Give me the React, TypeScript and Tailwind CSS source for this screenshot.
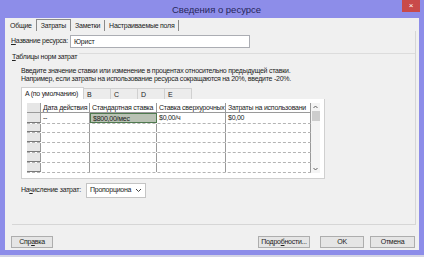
import React from "react";

const cols = [
  { w: "w-[49px]", title: "Дата действия" },
  { w: "w-[67px]", title: "Стандартная ставка" },
  { w: "w-[69px]", title: "Ставка сверхурочных" },
  { w: "w-[85px]", title: "Затраты на использовани" },
];

const rows = [
  ["--", "$800,00/мес", "$0,00/ч", "$0,00"],
  ["", "", "", ""],
  ["", "", "", ""],
  ["", "", "", ""],
  ["", "", "", ""],
  ["", "", "", ""],
];

const RateGrid = () => {
  return (
    <div className="flex ml-[5px] mt-[4px] w-[293px] h-[70px] overflow-hidden">
      <div className="flex flex-col">
        {/* header */}
        <div className="flex h-[10px] border-b border-[#9a9a9a]">
          <div className="w-[14px] bg-[#e6e6e6] border-r border-[#9a9a9a]"></div>
          {cols.map((c) => (
            <div
              key={c.title}
              className={`${c.w} border-r border-[#9a9a9a] pl-[2px] leading-[10px] whitespace-nowrap overflow-hidden text-[#222]`}
            >
              {c.title}
            </div>
          ))}
        </div>
        {rows.map((r, i) => (
          <div key={i} className="flex h-[10.5px] border-b border-dashed border-[#b4b4b4]">
            <div className="w-[14px] bg-[#e6e6e6] border-r border-[#9a9a9a] border-b border-b-[#7a7a7a]"></div>
            {r.map((v, j) =>
              i === 0 && j === 1 ? (
                <div
                  key={j}
                  className={`${cols[j].w} bg-[#b9c2b4] border border-[#4f7a4f] pl-[2px] leading-[9px] whitespace-nowrap text-[#222]`}
                >
                  {v}
                </div>
              ) : (
                <div
                  key={j}
                  className={`${cols[j].w} border-r border-[#9a9a9a] pl-[2px] leading-[10px] whitespace-nowrap text-[#222]`}
                >
                  {v}
                </div>
              )
            )}
          </div>
        ))}
      </div>
      {/* scrollbar */}
      <div className="w-[9px] flex flex-col items-center bg-[#f4f4f4]">
        <svg width="9" height="8" viewBox="0 0 9 8">
          <path d="M2.5 5 L4.5 3 L6.5 5" stroke="#606060" strokeWidth="1" fill="none" />
        </svg>
        <div className="w-[8px] h-[10px] bg-[#cdcdcd]"></div>
        <div className="flex-1"></div>
        <svg width="9" height="8" viewBox="0 0 9 8">
          <path d="M2.5 3 L4.5 5 L6.5 3" stroke="#606060" strokeWidth="1" fill="none" />
        </svg>
      </div>
    </div>
  );
};

const Button = ({ label, w }: { label: React.ReactNode; w: string }) => (
  <div
    className={`${w} h-[12px] border border-[#adadad] bg-[#e5e5e5] flex items-center justify-center text-[#222] whitespace-nowrap`}
  >
    {label}
  </div>
);

export default function App() {
  return (
    <div className="w-[424px] h-[257px] bg-[#8d8de9] flex flex-col font-['Liberation_Sans',Arial,sans-serif] text-[7px] tracking-[-0.25px] overflow-hidden">
      {/* title bar */}
      <div className="h-[18px] flex items-start relative">
        <div className="flex-1 text-center text-[9.5px] tracking-normal leading-[19px] text-[#26265a] pl-[9px]">
          Сведения о ресурсе
        </div>
        <div className="absolute right-[4px] top-0 w-[18px] h-[12px] bg-[#c94a4a] text-white text-[8px] leading-[12px] text-center">
          ×
        </div>
      </div>

      {/* body */}
      <div className="mx-[5px] h-[232px] bg-[#f0f0f0] flex flex-col relative">
        {/* tabs */}
        <div className="flex items-end h-[13px] pl-[5px] text-[7px] text-[#222] whitespace-nowrap">
          <div className="h-[11px] leading-[11px] pr-[4px]">Общие</div>
          <div className="h-[12px] leading-[12px] px-[4px] border border-b-0 border-[#8a8a8a] bg-[#f0f0f0]">Затраты</div>
          <div className="h-[11px] leading-[11px] px-[4px] border-r border-[#8a8a8a]">Заметки</div>
          <div className="h-[11px] leading-[11px] px-[4px] border-r border-[#8a8a8a]">Настраиваемые поля</div>
        </div>

        <div className="flex-1 flex flex-col border-r border-b border-[#d6d6d6] mr-[3px] ml-[7px] mb-[25px] whitespace-nowrap">
          {/* name */}
          <div className="flex items-center mt-[4px] -ml-[1px]">
            <div className="w-[59px] text-[#222]">
              <span className="underline">Н</span>азвание ресурса:
            </div>
            <div className="w-[180px] h-[13px] bg-white border border-[#abadb3] pl-[3px] leading-[11px] text-[#222]">
              Юрист
            </div>
          </div>

          {/* section header */}
          <div className="flex items-start mt-[1px] h-[11px]">
            <div className="text-[#222] leading-[11px] mt-[2px]">
              <span className="underline">Т</span>аблицы норм затрат
            </div>
            <div className="flex-1 border-t border-[#dcdcdc] mt-[4px] ml-[2px]"></div>
          </div>

          {/* instructions */}
          <div className="ml-[9px] mt-[7px] leading-[8px] text-[#222]">
            <div>Введите значение ставки или изменение в процентах относительно предыдущей ставки.</div>
            <div>Например, если затраты на использование ресурса сокращаются на 20%, введите -20%.</div>
          </div>

          {/* inner tabs */}
          <div className="ml-[9px] mt-[4px] flex items-end h-[12px] text-[#222]">
            <div className="w-[63px] h-[12px] bg-white border border-b-0 border-[#d0d0d0] pl-[3px] leading-[11px]">
              A (по умолчанию)
            </div>
            {["B", "C", "D", "E"].map((t) => (
              <div
                key={t}
                className="w-[27px] h-[11px] bg-[#ececec] border border-l-0 border-b-0 border-[#d0d0d0] pl-[3px] leading-[11px]"
              >
                {t}
              </div>
            ))}
          </div>
          <div className="ml-[9px] w-[304px] h-[80px] bg-white border border-t-0 border-[#d0d0d0]">
            <RateGrid />
          </div>

          {/* accrual */}
          <div className="ml-[9px] mt-[4px] flex items-center">
            <div className="w-[65px] text-[#222]">
              На<span className="underline">ч</span>исление затрат:
            </div>
            <div className="w-[60px] h-[15px] bg-white border border-[#c4c4c4] flex items-center pl-[3px] text-[#222]">
              <span className="flex-1">Пропорциона</span>
              <svg width="7" height="5" viewBox="0 0 7 5" className="mr-[3px]">
                <path d="M1 1 L3.5 3.5 L6 1" stroke="#444" strokeWidth="1" fill="none" />
              </svg>
            </div>
          </div>
        </div>

        {/* buttons */}
        <div className="absolute left-[6px] right-[4px] bottom-[2px] flex items-center">
          <Button w="w-[42px]" label={<span>Спр<span className="underline">а</span>вка</span>} />
          <div className="flex-1"></div>
          <Button w="w-[52px]" label={<span>Подро<span className="underline">б</span>ности...</span>} />
          <div className="w-[10px]"></div>
          <Button w="w-[44px]" label="OK" />
          <div className="w-[6px]"></div>
          <Button w="w-[45px]" label="Отмена" />
        </div>
      </div>
      <div className="h-[5px]"></div>
      <div className="flex-1 bg-[#d4d4e4]"></div>
    </div>
  );
}
